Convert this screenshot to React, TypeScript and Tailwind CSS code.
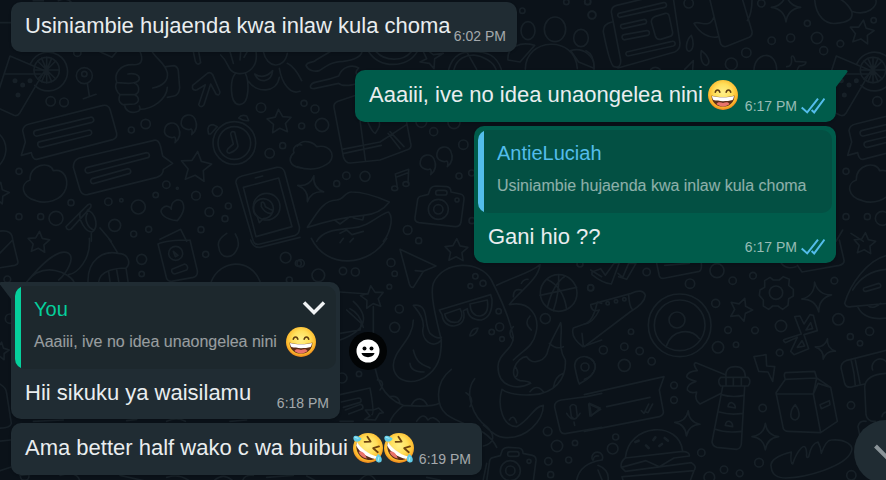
import type { ReactNode } from "react";

const TILE_WIDTH = 2481;

function starPath(cx: number, cy: number, r: number, turn: number, points = 5, inner = 0.5) {
  const out: string[] = [];
  for (let i = 0; i < points * 2; i++) {
    const a = ((turn - 90) * Math.PI) / 180 + (i * Math.PI) / points;
    const d = i % 2 === 0 ? r : r * inner;
    out.push(`${(cx + Math.cos(a) * d).toFixed(1)} ${(cy + Math.sin(a) * d).toFixed(1)}`);
  }
  return `M${out.join("L")}Z`;
}

function sparkPath(cx: number, cy: number, r: number, turn: number) {
  const at = (deg: number, d: number) => {
    const a = ((deg + turn) * Math.PI) / 180;
    return `${(cx + Math.cos(a) * d).toFixed(1)} ${(cy + Math.sin(a) * d).toFixed(1)}`;
  };
  let path = `M${at(-90, r)}`;
  for (let i = 0; i < 4; i++) {
    path += `Q${at(-45 + i * 90, r * 0.16)} ${at(i * 90, r)}`;
  }
  return `${path}Z`;
}

function Dots({ at }: { at: number[][] }) {
  return (
    <>
      {at.map(([x, y, r]) => (
        <circle key={`${x}-${y}`} cx={x} cy={y} r={r} />
      ))}
    </>
  );
}

function Drink() {
  return (
    <g>
      <path d="M30 168L134 212L60 338Q52 350 42 346L-14 320M30 168L-10 290M14 222H124M92 190A58 58 0 1 1 104 256" />
      <circle cx="140" cy="210" r="38" />
      <path d="M140 172V248M102 210H178M113 183L167 237M167 183L113 237M125 175L155 245M155 175L125 245" />
      <g strokeWidth="7">
        <Dots at={[[45, 242, 4], [90, 242, 4], [68, 255, 4], [54, 285, 4]]} />
      </g>
    </g>
  );
}

function ChatCards() {
  return (
    <g>
      <path d="M88 372L306 317Q324 312 330 328L350 400Q352 414 338 419L110 478Q98 480 94 458L64 466L76 426L68 392Q70 376 88 372Z" />
      <path d="M108 391L270 352A8 8 0 0 1 276 367L112 408A8 8 0 0 1 108 391ZM120 425L268 390A8 8 0 0 1 271 405L124 442A8 8 0 0 1 120 425Z" />
    </g>
  );
}

function Blob() {
  return <path d="M90 540C88 492 150 482 160 512C195 505 205 540 198 565C185 605 135 612 108 602C62 590 60 550 90 540Z" />;
}

function CommaMarks({ x, y }: { x: number; y: number }) {
  return (
    <g transform={`translate(${x} ${y})`}>
      <path d="M31 45C20 50 -2 42 2 22C6 2 32 -5 43 15C52 35 45 52 33 62C36 52 36 48 31 45Z" />
      <path d="M81 21C70 26 48 18 52 -2C56 -22 82 -29 93 -9C102 11 95 28 83 38C86 28 86 24 81 21Z" />
    </g>
  );
}

function Camera({ x, y }: { x: number; y: number }) {
  return (
    <g transform={`translate(${x} ${y})`}>
      <path d="M-50 -40L-30 -45L-24 -62Q-18 -70 -6 -70L26 -68Q38 -66 38 -52L66 -46Q78 -43 77 -30L68 38Q65 53 50 52L-58 40Q-72 37 -70 24L-62 -30Q-60 -39 -50 -40Z" />
      <circle r="30" />
      <circle r="14" />
      <circle cx="56" cy="-28" r="6" />
      <rect x="-8" y="-57" width="34" height="14" rx="7" />
    </g>
  );
}

function Wallpaper() {
  return (
    <svg
      className="pointer-events-none absolute left-0 top-0 h-[480px] w-[886px]"
      viewBox="0 0 2658 1440"
      preserveAspectRatio="xMinYMin slice"
      fill="none"
      stroke="#172027"
      strokeWidth="5"
      strokeLinejoin="round"
      strokeLinecap="round"
      aria-hidden="true"
    >
      <g>
        <Drink />
        <ChatCards />
        <Blob />
        <Dots at={[[152, 304, 14], [192, 307, 13], [394, 390, 9], [437, 372, 14], [57, 514, 9], [783, 323, 14], [848, 437, 9], [809, 460, 14], [499, 554, 11], [467, 585, 8], [532, 565, 3], [588, 587, 13], [652, 574, 15], [685, 618, 9], [675, 656, 9], [628, 636, 13], [603, 689, 9], [446, 688, 9], [401, 702, 9], [344, 676, 18], [415, 621, 21], [325, 605, 11], [364, 601, 5], [213, 608, 9], [168, 655, 21], [122, 650, 9], [57, 650, 9], [232, 158, 11]]} />
        <circle cx="253" cy="227" r="24" />
        <circle cx="253" cy="222" r="8" />
        <path d="M262 250L268 288M250 296L288 283M-20 390Q18 410 18 450Q14 490 -20 510M0 68H34" />
        <path d="M418 150C434 184 422 196 398 194C358 194 342 222 350 246C342 262 352 278 360 284C352 304 362 312 374 316C376 332 392 340 408 336C422 334 422 326 418 318M384 222C400 218 418 224 418 236C418 246 400 250 386 250L352 248M362 284H404C420 280 420 256 404 250M372 314L404 312C420 306 418 290 404 284M458 264C490 258 506 240 502 218C496 190 470 178 456 154M418 328C460 328 500 296 502 262M498 200L522 197Q534 200 535 214L539 264Q536 286 522 288L502 292" />
        <path d="M578 256L622 220Q632 214 638 224L660 276Q658 290 648 282L632 252L612 314Q602 326 596 314L616 254L590 270Q574 272 578 256ZM580 155L586 184Q592 198 602 188L596 155" />
        <path d="M662 165C690 190 680 215 712 220C745 225 775 200 768 155M705 222C690 240 688 312 718 314C752 312 746 240 736 220M745 244C770 280 830 280 838 232M764 222C780 232 800 232 818 212C814 250 776 250 764 222ZM790 155C800 205 852 210 862 160M838 205C846 250 870 285 900 274M862 190Q884 200 905 242M690 155L700 190M722 155L720 180M742 155L732 172M300 155L336 172L350 155" />
        <CommaMarks x={492} y={366} />
        <path d={starPath(838, 366, 38, -4)} />
        <path d={starPath(588, 502, 48, 6)} />
        <path d={starPath(-6, 580, 34, 14)} />
        <circle cx="703" cy="429" r="64" />
        <circle cx="703" cy="429" r="49" />
        <path d="M692 402Q694 392 704 396L714 438Q712 450 688 460Q676 456 684 446L700 432ZM626 402Q618 374 640 374L652 380L632 402ZM716 354Q724 342 740 348L746 362Q732 364 716 354Z" />
        <path d="M238 474L462 421Q476 418 482 440L488 468L518 490L490 508Q490 526 470 532L262 584Q246 586 240 570L220 502Q220 480 238 474ZM262 502L440 458A8 8 0 0 1 444 473L266 519A8 8 0 0 1 262 502ZM276 536L384 506A8 8 0 0 1 388 521L280 551A8 8 0 0 1 276 536Z" />
        <path d="M518 660C492 654 474 636 488 624C500 612 512 622 514 628C512 604 532 594 546 604C560 626 544 648 532 662Z" />
        <path d="M198 680L264 614Q276 608 272 622L212 688Q200 692 198 680ZM240 640C236 660 256 696 276 696C296 684 290 640 262 630M262 640C252 656 262 684 282 690M300 684L334 724M274 700V724M480 718L542 688L560 724M-5 694Q40 686 38 724" />
        <path d="M726 528L830 502Q848 500 854 516L898 680Q900 700 886 706L780 732Q764 736 760 724L708 548Q706 534 726 528M730 562L836 534L876 680L768 710ZM766 534L788 528" />
        <circle cx="800" cy="620" r="40" />
        <path d="M778 668L772 650A30 30 0 1 1 790 656ZM784 608Q792 602 796 620L810 628Q822 630 816 638Q800 646 784 620Z" />
        <path d="M905 435C890 430 876 444 882 458C862 476 868 500 905 504M100 2H130M175 2Q200 -10 215 8" />
      </g>

      <g transform="translate(900 0)">
        <Dots at={[[667, 32, 8], [799, 6, 8], [863, 5, 9], [876, 45, 12], [12, 310, 9], [45, 327, 12], [66, 375, 20], [5, 378, 9], [401, 395, 12], [364, 366, 16], [462, 368, 18], [490, 434, 14], [477, 528, 9], [515, 519, 9], [139, 527, 11], [110, 551, 9], [195, 529, 15], [323, 690, 13], [516, 662, 9]]} />
        <ellipse cx="684" cy="92" rx="21" ry="27" />
        <ellipse cx="765" cy="88" rx="32" ry="37" />
        <ellipse cx="843" cy="114" rx="22" ry="26" />
        <path d="M624 180C620 140 662 124 704 136M624 180L660 186L704 136M676 208C676 112 826 104 832 206M812 152C850 140 886 170 882 205M812 152L836 186L882 205" />
        <path d="M18 196C24 182 42 190 48 180L90 155M18 196C24 212 44 216 58 212C90 190 100 186 130 184C160 180 182 170 186 155M32 256C40 240 60 250 116 228C126 200 156 192 176 204C160 220 170 234 202 232C180 256 130 262 116 250L42 266Q28 266 32 256Z" />
        <path d="M206 155C240 206 320 206 352 155M228 155C256 186 310 184 334 155M370 155L380 176L360 186L388 190L402 206L404 176L430 160L400 164L388 155M446 208C460 160 490 155 520 155M604 208C590 165 560 155 520 155M462 208C470 175 500 165 520 165C550 168 580 185 588 208M500 155L530 208" />
        <path d="M102 322Q100 310 114 304L170 285M102 322L130 470Q136 490 152 489L240 480L326 448Q336 442 332 430L320 368M126 448L240 426L320 374M132 460L244 436M180 360L196 480M264 400L300 446M270 395L312 440M204 368C214 390 220 400 226 400C240 380 240 372 238 368" />
        <path d="M-8 438C10 412 44 430 50 440C100 430 110 480 78 494C50 512 20 510 -8 500" />
        <CommaMarks x={359} y={462} />
        <path d={sparkPath(32, 566, 40, 14)} />
        <path d="M292 562L286 522L326 508L324 548M288 532L324 518" />
        <ellipse cx="284" cy="565" rx="9" ry="7" />
        <ellipse cx="318" cy="552" rx="9" ry="7" />
        <Camera x={415} y={628} />
        <path d="M22 682C50 640 70 600 110 600C130 600 136 574 156 576C200 576 240 594 268 606C250 630 220 644 190 646C150 650 90 660 22 682ZM106 662L120 672L150 650M160 654L188 660L192 646M50 724C70 690 110 690 156 684C210 680 240 640 266 636C286 660 262 710 250 724M120 700L140 690L156 704L190 694" />
      </g>

      <g transform="translate(1758 0)">
        <path d="M76 36Q76 20 92 16L180 -5M76 36L104 180Q106 206 84 200Q72 196 52 96Q50 72 78 66M262 -5L282 130Q282 150 266 156L96 204M98 40L232 8A7 7 0 0 1 236 22L100 52A7 7 0 0 1 98 40ZM106 74L176 58A7 7 0 0 1 178 71L110 86A7 7 0 0 1 106 74ZM114 104L182 92A7 7 0 0 1 184 106L118 119A7 7 0 0 1 114 104ZM122 156L258 124A7 7 0 0 1 262 138L126 168A7 7 0 0 1 122 156ZM206 50L238 40Q248 38 250 50L260 98Q260 108 250 110L224 118Q212 120 208 108L196 66Q196 54 206 50Z" />
        <path d="M372 0L404 132Q412 144 424 138L490 112Q500 106 498 94L470 0M384 50C370 90 340 60 324 70C340 98 370 118 398 110M498 0Q498 40 484 62M316 106C300 120 296 152 310 154C326 148 322 120 316 106ZM346 152C342 174 348 196 362 196C376 188 366 166 346 152ZM296 208L322 182L320 208M504 208C508 155 570 150 572 208M602 200Q620 200 616 172Q622 160 628 184L660 186Q660 196 640 198L634 208M194 208Q208 196 222 208M0 152Q26 164 24 208" />
        <path d="M686 0C690 50 720 74 750 70C780 68 804 60 797 34C780 0 750 -10 740 -10M797 34C840 50 880 20 868 -5" />
        <Dots at={[[308, 10, 14], [526, 10, 11], [664, 70, 9], [557, 122, 11], [614, 114, 12], [693, 114, 17], [713, 152, 12], [763, 131, 10], [863, 61, 8], [481, 158, 14], [436, 192, 18], [18, 45, 11], [5, 5, 9], [874, 304, 14], [780, 514, 9], [780, 650, 9], [844, 650, 9]]} />
        <path d={sparkPath(600, 22, 44, 0)} />
        <path d={starPath(827, 98, 38, 8)} />
        <path d="M795 700L832 724M770 690L750 724" />
      </g>
      <g transform={`translate(${TILE_WIDTH - 2} 0)`}>
        <Drink />
        <ChatCards />
        <Blob />
        <circle cx="168" cy="655" r="21" />
      </g>

      <g transform="translate(0 720)">
        <Dots at={[[425, 58, 15], [425, 102, 8], [617, 43, 9], [857, 53, 16], [895, 70, 9], [868, 120, 9], [22, 118, 10], [30, 236, 14], [74, 708, 13]]} />
        <path d={starPath(116, 8, 34, 4)} />
        <path d={starPath(0, 334, 28, 10)} />
        <path d="M38 0L54 66Q54 74 44 76L-5 84M38 0L-5 44M80 126C110 90 170 20 206 40C226 54 200 100 176 120M80 126C130 60 210 100 222 126M268 -5C274 60 230 100 206 104M326 -5L354 40C310 30 262 60 264 126M354 40C390 40 392 76 378 84C350 84 300 90 296 126M378 84L384 124M326 96L330 124M350 90L356 124M474 12L498 108Q500 124 514 124L580 112Q594 108 592 92L570 0M474 12Q500 0 570 0M516 88L554 72A11 11 0 0 1 560 90L524 102A10 10 0 0 1 516 88ZM634 124C660 60 750 50 780 124M752 0Q760 24 780 22L900 -8M680 -20Q650 0 656 20C660 60 700 60 714 20Q718 0 706 -18" />
        <circle cx="527" cy="40" r="21" />
        <path d="M520 34L534 46L526 50ZM-5 430Q18 440 20 460L34 550Q30 566 -5 564M-5 604L32 600M0 692L36 680M60 706L120 700M180 706Q230 690 240 724M360 706L440 724M500 712Q540 700 570 724M640 724Q670 694 700 724M728 724Q730 704 760 706M100 544L190 540M380 542L410 538M500 544Q530 530 556 544M690 544L740 540M800 712L880 706" />
      </g>

      <g transform="translate(900 720)">
        <Dots at={[[55, 106, 19], [129, 93, 11], [166, 96, 12], [273, 68, 12], [284, 101, 8], [268, 140, 7], [356, 2, 9], [298, 207, 12], [284, 262, 15], [177, 402, 8], [126, 414, 15], [2, 70, 11], [526, 109, 8], [511, 138, 7], [549, 130, 9], [596, 214, 8], [599, 261, 12], [575, 276, 8], [606, 297, 7], [736, 236, 15], [872, 143, 9], [743, 574, 13], [771, 618, 17], [825, 609, 8], [745, 664, 11], [806, 660, 9], [752, 704, 9], [840, 72, 9]]} />
        <path d={starPath(469, 32, 36, 2)} />
        <path d={starPath(217, 173, 36, -8)} />
        <path d="M300 28L408 78L370 94L340 142Q332 144 328 132L300 28ZM346 92L370 94M34 -5C80 90 210 80 260 -5M120 8L130 -5M150 6L160 -5" />
        <path d="M424 300C404 220 390 160 400 130C430 60 540 60 574 120C610 190 630 240 640 290C640 330 594 340 594 380C594 440 650 452 692 430Q690 424 660 422C620 410 650 350 680 350C700 380 740 360 744 330C756 290 770 276 782 248C790 280 770 320 796 360C800 420 760 460 700 464C660 468 620 460 606 448M590 136C640 110 690 100 720 74C716 120 650 160 628 194C690 180 720 230 708 278C700 320 670 330 640 360M424 300C400 330 360 300 370 260C372 230 350 210 340 196C390 190 370 250 390 280Q410 298 424 292M340 240C340 300 280 330 280 376C280 430 350 440 390 400C420 372 424 340 424 300M340 330C352 380 380 376 390 384M330 370Q332 396 372 396M220 320C220 400 240 470 310 496C360 500 400 500 418 490M232 420C252 420 250 440 240 450M270 470Q296 464 300 492M334 496C346 470 370 470 382 496M454 388C400 430 410 500 440 524C490 560 560 560 590 622M524 416C490 460 520 530 560 560C590 590 580 610 550 618M498 458Q524 474 510 500M606 448C590 500 610 560 650 560C690 540 700 500 730 496C730 540 680 600 610 592C580 590 560 560 550 555M628 540Q640 520 650 548M310 496Q276 524 270 546M350 544Q370 514 384 540Q400 524 418 546M640 170Q640 144 664 150M664 130Q672 116 684 118M690 228Q670 250 694 270M640 260Q620 280 640 300M646 380Q660 400 646 412M690 455Q710 430 730 455M790 400Q764 410 760 444M748 310Q770 330 790 320" />
        <path d="M418 210L572 164L576 178Q578 232 544 240Q504 240 502 206L490 212Q500 252 462 258Q430 258 426 224ZM434 222L480 206Q494 230 474 246Q440 252 434 222ZM510 192L562 180Q568 224 540 228Q512 228 510 192ZM510 284Q516 264 534 264Q528 286 510 288Z" />
        <circle cx="776" cy="159" r="55" />
        <path d="M740 118Q790 140 800 208M720 166L830 142M742 202Q760 130 796 108M776 104Q778 160 760 212" />
        <path d="M120 156L204 162M160 184C210 230 200 270 120 300M140 210L184 250L180 270L120 280M150 206Q180 220 190 262M220 200V370Q220 384 226 386M210 444L120 464M210 444Q224 520 216 524M124 486L176 474A7 7 0 0 1 180 487L130 502M136 510L178 494A7 7 0 0 1 184 508L146 522M196 510L210 528L194 538L226 540L238 520L250 518L236 504L220 510ZM120 544H160" />
        <path d="M860 470L905 460M860 470L784 480Q762 484 764 502L780 570Q784 584 800 580L905 562M810 500Q818 488 828 498L832 530Q826 544 814 530ZM800 520Q820 554 840 520M822 546L824 556M868 490L900 504L874 528ZM824 378C824 340 880 340 886 378C884 410 850 424 838 432Q832 420 824 378ZM905 190L892 186Q880 240 860 250L820 264Q810 290 848 320L905 300M846 280L850 318M872 90L905 110M550 718L560 670" />
        <circle cx="855" cy="381" r="12" />
        <Camera x={631} y={692} />
        <path d="M830 720Q840 670 905 660M880 660Q880 646 896 648M180 720Q206 690 226 720M20 708L50 724M380 712L420 720" />
      </g>

      <g transform="translate(1758 720)">
        <Dots at={[[182, 96, 11], [14, 144, 9], [393, 92, 21], [312, 131, 14], [440, 122, 11], [501, 107, 10], [389, 190, 12], [745, 122, 10], [585, 258, 17], [507, 271, 10], [426, 270, 10], [396, 322, 17], [450, 314, 8], [581, 338, 10], [757, 238, 17], [793, 290, 9], [822, 310, 8], [851, 274, 12], [135, 275, 8], [115, 320, 11], [52, 330, 12], [161, 333, 11], [197, 364, 11], [115, 376, 18], [264, 436, 10], [264, 480, 10], [530, 504, 11], [795, 496, 11], [89, 591, 9], [80, 626, 16], [346, 638, 11], [519, 668, 13], [414, 689, 11], [461, 700, 10], [370, 712, 16], [796, 706, 14]]} />
        <circle cx="281" cy="256" r="94" />
        <circle cx="281" cy="256" r="76" />
        <circle cx="273" cy="240" r="24" />
        <path d="M240 320C258 266 316 264 340 296M18 96L44 86L58 106L84 70L100 68L76 132Q50 130 18 104ZM96 100L110 112L128 70L150 70L122 118L98 110M212 70L220 108Q224 118 238 114L340 94Q348 90 346 70M236 76L310 70M586 70Q600 90 630 80M634 76L648 96L760 76Q776 72 774 60L760 0" />
        <path d="M14 194L136 160Q170 144 178 166Q176 190 132 216L-5 320M14 194Q16 218 40 210M128 166Q130 200 140 210M40 210Q20 250 -5 252" />
        <Dots at={[[65, 190, 5], [90, 184, 5], [115, 178, 5], [570, 158, 20]]} />
        <path d="M552 112L562 120H580L592 110L610 118L608 136L622 148V168L608 176L606 196L590 208L576 198H560L548 208L532 198V180L520 166L522 150L536 142L536 122Z" />
        <path d={starPath(464, 209, 36, 20)} />
        <path d={starPath(836, 12, 34, 4)} />
        <path d={sparkPath(692, 171, 45, -8)} />
        <path d={sparkPath(718, 327, 31, 12)} />
        <path d={sparkPath(304, 550, 38, 4)} />
        <path d={sparkPath(538, 590, 40, 0)} />
        <path d="M626 230L642 228L654 252L672 224L682 226L694 272L654 284L668 326L624 344L614 334L634 292L598 308Q588 300 596 298L646 282ZM660 270L674 248L680 266ZM634 322L648 302L656 318ZM504 350L540 344L542 378L566 380L560 424L546 396L518 394Z" />
        <path d="M776 190C790 140 840 60 905 46M776 190Q780 204 796 200L905 190M800 150C830 100 870 90 905 88M834 144L878 130A7 7 0 0 1 882 142L840 154A6 6 0 0 1 834 144ZM816 202C830 230 860 240 905 234M846 196Q860 210 884 190" />
        <path d="M420 412Q416 380 448 380Q478 380 478 412M404 412H486Q498 424 486 438H404Q392 424 404 412ZM420 414V436M442 414V438M466 414V438M410 440L378 606Q380 618 392 622L452 628Q464 626 466 612L476 440M406 464Q440 474 474 466M400 516Q432 526 470 520M388 568Q420 580 466 574M418 404L330 368Q318 370 334 392Q304 394 302 410Q308 418 330 424Q302 432 304 450Q314 462 332 456Q324 480 342 492L406 460M426 500Q428 486 438 488Q448 492 448 504ZM418 556Q420 542 430 544Q440 548 440 560Z" />
        <path d="M598 398L686 394L692 414L598 418Q592 404 598 398ZM598 418L570 458L592 566Q596 574 606 574L704 578L754 544L734 442L692 414L682 462H570M682 462L704 578M682 462L696 430L734 442M628 494C612 510 608 540 628 540C646 534 640 510 628 494ZM702 494L730 482L732 494L706 506Z" />
        <path d="M-5 464L234 410L220 450L232 514Q234 524 220 530L-5 574M8 492L44 508L12 528ZM62 500L192 472M166 512L174 520L188 492M180 516L186 518L200 492M0 350Q30 360 28 384Q20 410 -5 418" />
        <path d="M118 654C128 550 280 540 290 634M118 654L290 634Q312 636 310 648L264 654L220 680L180 662L106 682Q102 666 118 654M106 682L118 694L316 668Q334 678 324 692L112 710M108 710L112 724M324 692L312 724M20 660A16 16 0 1 1 48 660M36 676Q72 690 66 724M36 690L50 724" />
        <path d="M148 606L158 602M202 600L208 592M236 594L246 602M180 616L188 624M220 618L228 612" strokeWidth="8" />
        <path d="M556 684C546 654 600 640 616 636Q612 670 620 672Q630 640 646 624Q660 610 662 640Q660 658 668 650Q676 610 696 606Q704 620 706 640Q720 600 736 600C780 596 804 618 796 634C780 680 660 712 600 714Q560 714 556 684Z" />
        <path d="M905 330L780 362Q762 370 766 388L776 430Q782 446 800 440L836 432M796 362Q806 400 808 438M808 360L822 430M905 400Q840 402 836 440L840 524Q844 546 868 544M905 516Q890 516 888 530M816 560Q820 540 840 544M816 560L822 590M860 390A24 24 0 0 1 905 372" />
      </g>
    </svg>
  );
}

function FaceGradient({ id }: { id: string }) {
  return (
    <radialGradient id={id} cx="50%" cy="42%" r="58%">
      <stop offset="0" stopColor="#fff08a" />
      <stop offset="0.5" stopColor="#ffdf5a" />
      <stop offset="0.82" stopColor="#fdb92c" />
      <stop offset="1" stopColor="#ea811c" />
    </radialGradient>
  );
}

function GrinEmoji({ id }: { id: string }) {
  return (
    <svg className="my-px size-8 shrink-0" viewBox="0 0 32 32" role="img" aria-label="😄">
      <defs>
        <FaceGradient id={id} />
      </defs>
      <circle cx="16" cy="16" r="15" fill={`url(#${id})`} />
      <path d="M8.3 13.2C8.9 10.2 12.2 10.2 12.8 13.2M19.2 13.2C19.8 10.2 23.1 10.2 23.7 13.2" fill="none" stroke="#5c3a10" strokeWidth="1.6" strokeLinecap="round" />
      <path d="M4.6 16.4C10 18.4 22 18.4 27.4 16.4C27.6 23 22.5 27.6 16 27.6S4.4 23 4.6 16.4Z" fill="#5b2d18" />
      <path d="M5 17C10.5 18.8 21.5 18.8 27 17C26.8 19 26.2 20.2 25.6 21C20 22.6 12 22.6 6.4 21C5.6 20 5.1 18.8 5 17Z" fill="#fff" />
      <path d="M9.4 25C11 22.6 14 23.2 16 24C18 23.2 21 22.6 22.6 25C19 28.2 13 28.2 9.4 25Z" fill="#e9736b" />
    </svg>
  );
}

function RollingEmoji({ id }: { id: string }) {
  return (
    <svg className="-mr-px my-px size-8 shrink-0" viewBox="0 0 32 32" role="img" aria-label="🤣">
      <defs>
        <FaceGradient id={id} />
      </defs>
      <circle cx="16" cy="16" r="15" fill={`url(#${id})`} />
      <path d="M4.8 10.4C2.6 18 7.4 26.4 15.2 27.8C19 28.4 22.4 27.4 24.6 25.4C16.6 22.4 9.6 17.4 4.8 10.4Z" fill="#5b2d18" />
      <path d="M5 10C9.4 16.6 16 22 25.2 24.6L23.2 27C14.400 25 7.400 20 4.200 13.400Z" fill="#fff" />
      <path d="M6.600 20C9.600 18.600 13 21 14.800 26.600C11 26 7.800 23.400 6.600 20Z" fill="#e9736b" />
      <path d="M12.600 9.800L18.600 9.600L15.400 4.800M27 14.400L21.200 16.200L25.800 20.200" fill="none" stroke="#6d430f" strokeWidth="1.8" strokeLinecap="round" strokeLinejoin="round" />
      <path d="M1.800 4.600C3 2.600 7.600 4.400 9.600 6.800C8.400 9.800 4.400 10.600 2.600 9C1.200 7.600 1 5.800 1.800 4.600ZM26.200 22C29 23.400 30.600 27.400 29.400 29.400C28.200 31 25.400 30.800 24.200 29C23.200 27.200 24 23.800 26.200 22Z" fill="#62cde8" />
      <path d="M3 5.200L6 6.200M26.800 25.400L26.200 28.600" stroke="#a4e9f6" strokeWidth="1.200" strokeLinecap="round" />
    </svg>
  );
}

function ReadTicks() {
  return (
    <svg className="h-5 w-6" viewBox="0 0 24 20" fill="none" stroke="#53bdeb" strokeWidth="2" role="img" aria-label="Read">
      <path d="M.7 11.4L6.2 16.4L17 2.600M10.600 14L13.200 16.400L23.500 2.600" />
    </svg>
  );
}

function MessageLine({ time, read, children }: { time: string; read?: boolean; children: ReactNode }) {
  return (
    <div className="flex items-end justify-between pb-1.5 pl-[14px] pr-[11px] pt-2">
      <p className="flex items-center gap-1 whitespace-nowrap pb-1 text-[22px] leading-8 text-[#e9edef]">{children}</p>
      <div className="flex items-center gap-1 whitespace-nowrap text-sm leading-5 text-white/60">
        <time>{time}</time>
        {read && <ReadTicks />}
      </div>
    </div>
  );
}

function Quote({ name, mine, action, children }: { name: string; mine?: boolean; action?: ReactNode; children: ReactNode }) {
  return (
    <blockquote
      className={`mx-1 mt-1 flex overflow-hidden rounded-[10px] ${mine ? "bg-[#1d282d]" : "bg-[#035043]"}`}
    >
      <span className={`w-1.5 shrink-0 ${mine ? "bg-[#06cf9c]" : "bg-[#53bdeb]"}`} />
      <div className="grow pb-[7px] pl-[13px] pr-[10px] pt-[10px]">
        <div className="flex items-center justify-between">
          <cite className={`text-xl leading-[26px] not-italic ${mine ? "text-[#06cf9c]" : "text-[#53bdeb]"}`}>{name}</cite>
          {action}
        </div>
        <p className="flex h-10 items-center gap-2 whitespace-nowrap text-base text-white/55">{children}</p>
      </div>
    </blockquote>
  );
}

export default function App() {
  return (
    <main className="relative min-h-screen overflow-hidden bg-[#0b1219] font-['Liberation_Sans',Arial,sans-serif]">
      <Wallpaper />

      <div className="relative flex flex-col items-start pb-[5px] pl-[11px] pr-[50px] pt-0.5">
        <article className="w-[506px] max-w-full rounded-[10px] bg-[#202c33] shadow-sm">
          <MessageLine time="6:02 PM">Usiniambie hujaenda kwa inlaw kula choma</MessageLine>
        </article>

        <article className="relative mt-[18px] w-[481px] max-w-full self-end rounded-[10px] rounded-tr-none bg-[#005c4b] shadow-sm">
          <svg className="absolute left-full top-0 h-[18px] w-3" viewBox="0 0 12 18" aria-hidden="true">
            <path d="M0 0H10Q12.500 .5 11 2.500L0 17Z" fill="#005c4b" />
          </svg>
          <MessageLine time="6:17 PM" read>
            Aaaiii, ive no idea unaongelea nini
            <GrinEmoji id="grin-sent" />
          </MessageLine>
        </article>

        <article className="mt-1 w-[362px] max-w-full self-end rounded-[10px] bg-[#005c4b] shadow-sm">
          <Quote name="AntieLuciah">Usiniambie hujaenda kwa inlaw kula choma</Quote>
          <MessageLine time="6:17 PM" read>Gani hio ??</MessageLine>
        </article>

        <div className="mt-[19px] flex items-center gap-[9px]">
          <article className="relative w-[329px] rounded-[10px] rounded-tl-none bg-[#202c33] shadow-sm">
            <svg className="absolute right-full top-0 h-[18px] w-3" viewBox="0 0 12 18" aria-hidden="true">
              <path d="M12 0H2Q-.5 .5 1 2.500L12 17Z" fill="#202c33" />
            </svg>
            <Quote
              name="You"
              mine
              action={
                <button type="button" aria-label="Message menu" className="cursor-pointer">
                  <svg className="h-4 w-6" viewBox="0 0 24 16" fill="none" stroke="#f0f3f4" strokeWidth="3.500">
                    <path d="M2 1.500L12 11.500L22 1.500" />
                  </svg>
                </button>
              }
            >
              Aaaiii, ive no idea unaongelea nini
              <GrinEmoji id="grin-quoted" />
            </Quote>
            <MessageLine time="6:18 PM">Hii sikuku ya waisilamu</MessageLine>
          </article>
          <button
            type="button"
            aria-label="React to message"
            className="flex size-[38px] cursor-pointer items-center justify-center rounded-full bg-[#020405]"
          >
            <svg className="size-6" viewBox="0 0 24 24">
              <circle cx="12" cy="12" r="11.500" fill="#fff" />
              <circle cx="8.500" cy="9.500" r="2" fill="#020405" />
              <circle cx="15.500" cy="9.500" r="2" fill="#020405" />
              <path d="M5.500 14H18.500C17.500 19.500 6.500 19.500 5.500 14Z" fill="#020405" />
            </svg>
          </button>
        </div>

        <article className="mt-1 w-[471px] max-w-full rounded-[10px] bg-[#202c33] shadow-sm">
          <MessageLine time="6:19 PM">
            Ama better half wako c wa buibui
            <span className="flex">
              <RollingEmoji id="rofl-first" />
              <RollingEmoji id="rofl-second" />
            </span>
          </MessageLine>
        </article>
      </div>

      <button
        type="button"
        aria-label="Scroll to bottom"
        className="absolute -bottom-1 -right-8 flex size-16 cursor-pointer items-center justify-center rounded-full bg-[#202c33]"
      >
        <svg className="h-4 w-6" viewBox="0 0 24 16" fill="none" stroke="#8b9499" strokeWidth="4">
          <path d="M1.500 2L12 12.500L22.500 2" />
        </svg>
      </button>
    </main>
  );
}
